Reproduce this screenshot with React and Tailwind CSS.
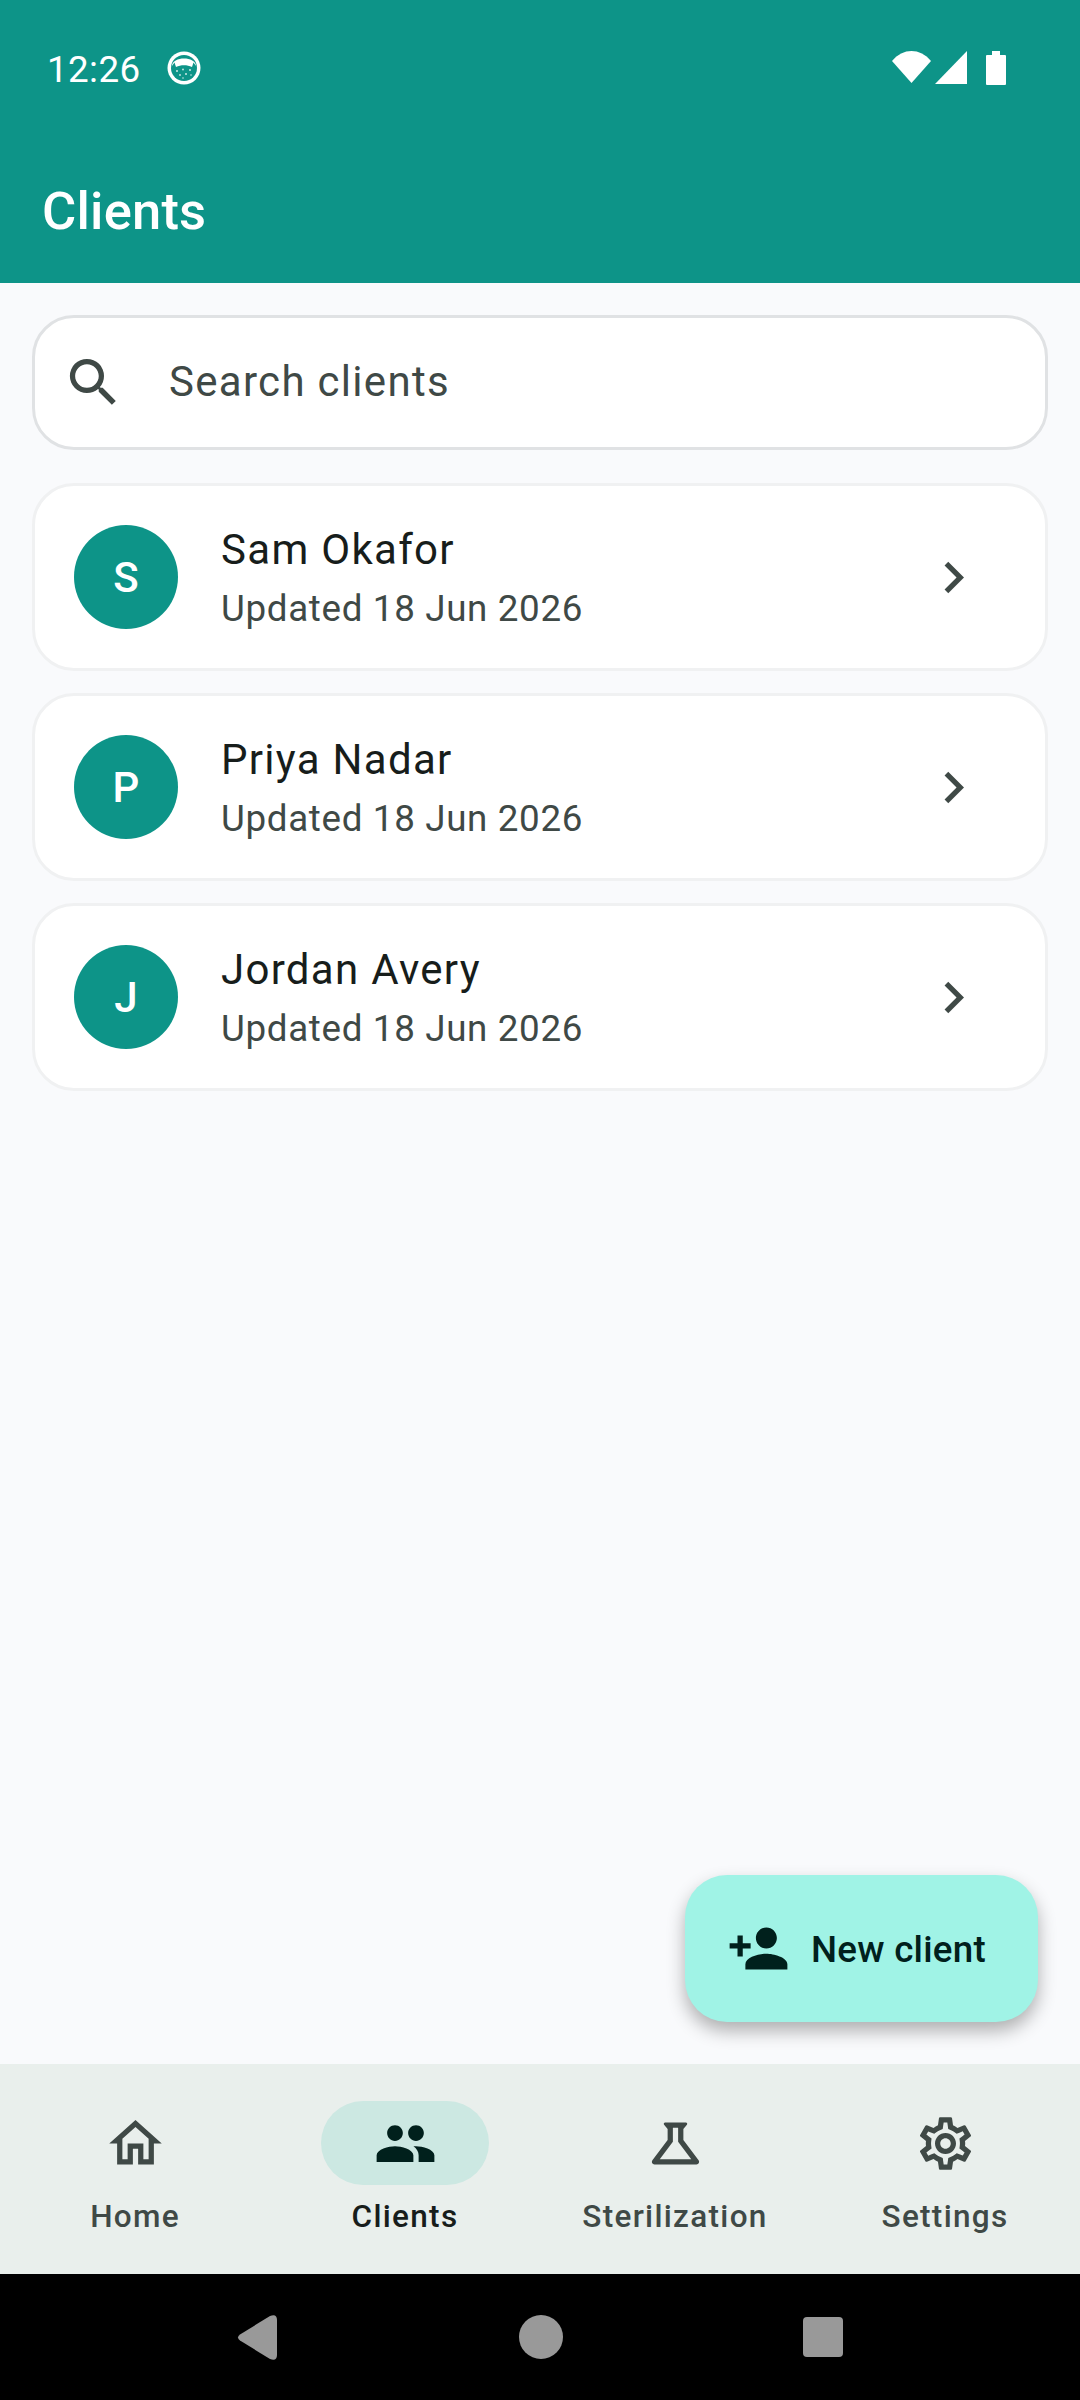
import React from "react";
import { MdOutlineHome, MdPeople, MdOutlineScience, MdOutlineSettings, MdPersonAdd, MdSearch, MdChevronRight } from "react-icons/md";

const clients = [
  { initial: "S", name: "Sam Okafor" },
  { initial: "P", name: "Priya Nadar" },
  { initial: "J", name: "Jordan Avery" },
];

function StatusGlyph() {
  return (
    <svg width="34" height="34" viewBox="0 0 34 34" className="ml-[26px]">
      <circle cx="17" cy="17" r="16.5" fill="#fff" />
      <circle cx="17" cy="17" r="13" fill="#0d9488" />
      <path d="M5 15 C5 5 29 5 29 15 L26.5 11.5 L25 16 C20 13.5 14 13.5 9 16 L7.5 11.5 Z" fill="#fff" />
      <g fill="#fff" opacity="0.8">
        <circle cx="10" cy="20" r="1" />
        <circle cx="16" cy="18.5" r="0.9" />
        <circle cx="23" cy="19" r="1" />
        <circle cx="13" cy="24" r="0.9" />
        <circle cx="19" cy="23" r="1" />
        <circle cx="24" cy="24" r="0.8" />
        <circle cx="16" cy="27" r="0.8" />
      </g>
    </svg>
  );
}

function Header() {
  return (
    <header className="bg-[#0d9488] h-[283px] shrink-0 text-white">
      <div className="flex h-[136px] pl-[47px] pr-[74px] pt-[51px] items-start justify-between">
        <div className="flex items-center h-[34px]">
          <span className="mt-[3px] text-[36.75px] leading-[34px] tracking-[0.4px]">12:26</span>
          <StatusGlyph />
        </div>
        <div className="flex items-start">
          <svg width="39" height="32" viewBox="0 0 39 32">
            <path d="M19.5 32 L0 10 C11 -3.3 28 -3.3 39 10 Z" fill="#fff" />
          </svg>
          <svg width="32" height="33" viewBox="0 0 32 33" className="ml-[4px]">
            <path d="M32 0 V33 H0 Z" fill="#fff" />
          </svg>
          <svg width="20" height="34" viewBox="0 0 20 34" className="ml-[19px]">
            <path d="M6 0 H14 V4 H19 Q20 4 20 5 V33 Q20 34 19 34 H1 Q0 34 0 33 V5 Q0 4 1 4 H6 Z" fill="#fff" />
          </svg>
        </div>
      </div>
      <h1 className="pl-[42px] text-[52.5px] leading-[70px] font-medium tracking-[0.2px] mt-[40px]">Clients</h1>
    </header>
  );
}

function SearchBox() {
  return (
    <div className="h-[135px] flex items-center bg-white border-[3px] border-[#e0e2e4] rounded-[42px] pl-[27px]">
      <MdSearch size={63} className="text-[#3f4946] shrink-0" />
      <span className="ml-[44px] mb-[2px] text-[42px] leading-[56px] tracking-[1.3px] text-[#3f4946]">Search clients</span>
    </div>
  );
}

function ClientCard({ initial, name }) {
  return (
    <div className="h-[188px] flex items-center bg-white border-[3px] border-[#f0f1f2] rounded-[42px] pl-[39px] pr-[60px]">
      <div className="w-[104px] h-[104px] rounded-full bg-[#0d9488] text-white flex items-center justify-center text-[42px] font-medium shrink-0">
        {initial}
      </div>
      <div className="ml-[43px] mt-[4px] flex-1 flex flex-col">
        <span className="text-[42px] leading-[58px] tracking-[1.3px] text-[#171d1b]">{name}</span>
        <span className="mt-[1px] text-[36.75px] leading-[58px] tracking-[0.66px] text-[#3f4946]">Updated 18 Jun 2026</span>
      </div>
      <MdChevronRight size={63} className="text-[#3f4946] shrink-0" />
    </div>
  );
}

function NavItem({ icon: Icon, label, active }) {
  return (
    <div className="flex flex-col items-center flex-1 pt-[37px]">
      <div className={`w-[168px] h-[84px] rounded-full flex items-center justify-center ${active ? "bg-[#cce8e2] text-[#00201c]" : "text-[#3f4946]"}`}>
        <Icon size={63} />
      </div>
      <span className={`mt-[6px] text-[31.5px] leading-[52px] font-medium tracking-[1.3px] ${active ? "text-[#171d1b]" : "text-[#3f4946]"}`}>{label}</span>
    </div>
  );
}

export default function App() {
  return (
    <div className="w-[1080px] h-[2400px] flex flex-col bg-[#f9fafc] font-['Roboto',sans-serif] overflow-hidden">
      <Header />
      <main className="relative flex-1 pl-[32px] pr-[32px] pt-[32px]">
        <SearchBox />
        <div className="mt-[33px] flex flex-col gap-[22px]">
          {clients.map((c) => (
            <ClientCard key={c.name} {...c} />
          ))}
        </div>
        <button className="absolute right-[42px] bottom-[42px] h-[147px] flex items-center pl-[42px] pr-[52px] rounded-[42px] bg-[#a0f3e6] text-[#00201c] shadow-[0_9px_18px_rgba(0,0,0,0.3)]">
          <MdPersonAdd size={63} />
          <span className="ml-[21px] mt-[2px] text-[36.75px] leading-[52px] font-medium tracking-[0.26px]">New client</span>
        </button>
      </main>
      <nav className="h-[210px] shrink-0 flex bg-[#e9efec]">
        <NavItem icon={MdOutlineHome} label="Home" />
        <NavItem icon={MdPeople} label="Clients" active />
        <NavItem icon={MdOutlineScience} label="Sterilization" />
        <NavItem icon={MdOutlineSettings} label="Settings" />
      </nav>
      <div className="h-[126px] shrink-0 bg-black flex items-center justify-center">
        <svg width="40" height="45" viewBox="0 0 40 45">
          <path d="M3 19.5 L33 1 Q40 -1.5 40 5 V40 Q40 46.5 33 44 L3 25.5 Q-1 22.5 3 19.5 Z" fill="#999" />
        </svg>
        <div className="w-[44px] h-[44px] rounded-full bg-[#999] ml-[242px]" />
        <div className="w-[40px] h-[40px] rounded-[4px] bg-[#999] ml-[240px]" />
      </div>
    </div>
  );
}
